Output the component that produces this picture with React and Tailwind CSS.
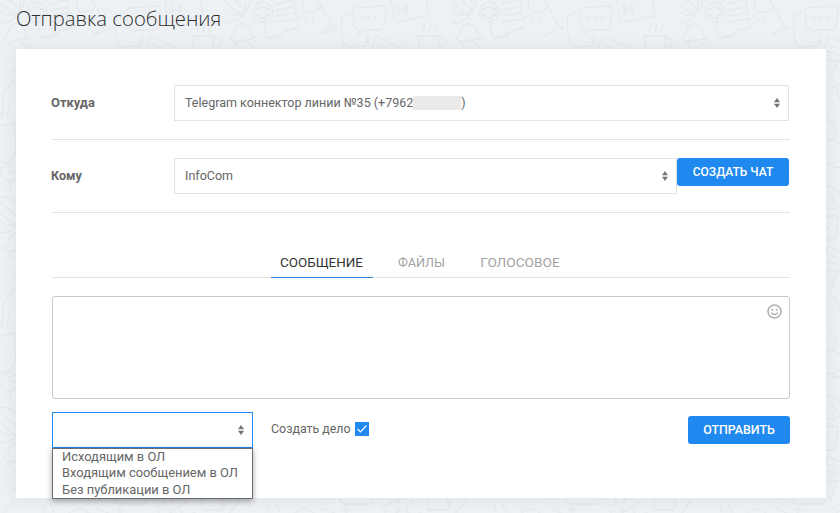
import React from "react";

function Arrows() {
  return (
    <svg width="6" height="10" viewBox="0 0 6 10" className="block">
      <path d="M3 0 L6 4.2 H0 Z M0 5.8 H6 L3 10 Z" fill="#737373" />
    </svg>
  );
}

function Select({ children, className }) {
  return (
    <div className={"flex h-9 items-center justify-between border border-[#e3e3e3] bg-white pl-[10px] pr-[8px] text-[12.5px] text-[#666666] " + className}>
      <div className="flex items-center whitespace-pre">{children}</div>
      <Arrows />
    </div>
  );
}

function Tile() {
  return (
    <g fill="none" stroke="#e5e8ec" strokeWidth="1.3" strokeLinecap="round" strokeLinejoin="round">
      {/* pie */}
      <circle cx="10" cy="1" r="14" />
      <path d="M10 1 L2 -12 M10 1 L22 -6 M10 1 L2 -12 L12 -6 Z" />
      {/* doc with plus */}
      <path d="M44 -8 L66 -12 L72 28 L42 38 Q36 30 40 14" />
      <circle cx="37" cy="12" r="10" />
      <path d="M34 7 H40 V9 H44 V15 H40 V18 H34 V15 H30 V9 H34 Z" />
      <path d="M50 4 L66 0 M50 10 L68 7 M50 16 L69 13 M50 22 L70 19 M42 38 L56 36 Q54 32 60 30 L70 28" />
      {/* desk lamp */}
      <path d="M78 -4 Q82 -8 90 -2 L96 6 Q90 14 80 12 Q74 6 78 -4 Z M96 6 L100 14 L102 18 L106 26 L92 36 L112 28 L106 26" />
      <path d="M81 18 L79 22 M87 20 L87 25 M76 16 L72 19" />
      {/* tablet with speech bubble */}
      <path d="M118 16 L124 12 M116 14 Q114 30 118 44 L122 47 L140 46 L143 34 M140 34 L143 44" />
      <path d="M130 8 L156 6 Q160 6 160 10 L158 26 Q157 30 153 30 L138 30 L132 34 L134 30 Q128 28 128 24 L127 12 Q127 8 130 8 Z" />
      <circle cx="136" cy="18" r="0.8" />
      <circle cx="143" cy="18" r="0.8" />
      <circle cx="150" cy="18" r="0.8" />
      {/* calendar */}
      <path d="M164 -6 L168 20 Q169 23 172 22 L200 16 Q204 15 203 12 L199 -6" />
      <path d="M172 4 L170 10 L176 10 M174 8 L172 16 M180 4 L177 12 L183 11 M181 6 L181 16" />
      {/* person / mushroom */}
      <path d="M8 34 Q10 22 18 24 Q25 26 26 36 L30 38 L8 42 L4 38 Z M10 42 Q10 50 18 50 M22 42 L30 50" />
      {/* cup */}
      <path d="M192 36 L214 36 L212 56 L195 56 Z M214 38 Q222 38 220 44 Q218 48 212 48 M198 32 Q196 30 198 28 Q200 26 198 24 M204 32 Q202 30 204 28 Q206 26 204 24 M210 32 Q208 30 210 28 Q212 26 210 24" />
      {/* card */}
      <path d="M150 36 L180 50 L172 60 L146 50 Z M150 44 L176 54" />
      {/* lower row */}
      <path d="M114 60 L114 78 Q114 84 120 84 L146 84 L146 60 M124 76 L132 76" />
      <path d="M154 88 L176 78 L188 82 L168 94 M158 90 L166 110 M170 88 L176 110 M180 86 L186 106" />
      <circle cx="194" cy="96" r="3" />
      <path d="M202 78 V90 H222 V78 M222 80 Q228 82 222 88" />
      <path d="M50 84 L54 92 M42 86 L44 92 M70 92 L80 88 L90 94 L70 100 Z" />
      <path d="M120 84 V94 M116 90 H124" />
      <path d="M92 72 L116 62 L120 70 L100 80 Z M96 88 L126 100" />
      <path d="M164 60 Q176 70 172 84 M152 80 Q156 70 160 60" />
      {/* left side */}
      <path d="M-6 128 L14 122 L16 150 Q10 168 -4 160 Z M14 132 Q24 134 22 142 M2 118 Q0 114 3 112 Q5 108 2 106 M8 116 Q6 112 9 110 Q11 106 8 104" />
      <circle cx="10" cy="172" r="9" />
      <path d="M10 166 V172 H15 M10 181 V192" />
      <circle cx="2" cy="215" r="18" />
      <path d="M-10 204 L18 228 M-4 198 L22 222" />
      <path d="M14 80 L4 92 L2 104 M16 68 L12 72" />
      {/* right side */}
      <path d="M150 120 Q160 124 158 136 Q150 144 144 140" />
      <circle cx="152" cy="152" r="12" />
      <path d="M158 166 L158 168 M155 167 H161" />
      <circle cx="160" cy="168" r="0.6" />
      <path d="M148 186 Q164 188 164 202 Q160 212 148 208 M152 194 L158 200 L154 204" />
      <path d="M150 60 L164 62 L164 84" />
      <path d="M60 130 L84 126 L88 150 L64 154 Z M120 140 L140 136 L144 160 L124 164 Z" />
    </g>
  );
}

function Background() {
  return (
    <svg className="absolute inset-0" width="840" height="513">
      <defs>
        <pattern id="doodles" x="0" y="0" width="226" height="210" patternUnits="userSpaceOnUse">
          <svg x="0" y="0" width="226" height="210" viewBox="0 0 226 210" overflow="hidden">
            <Tile />
          </svg>
          <svg x="0" y="0" width="226" height="210" viewBox="0 210 226 210" overflow="hidden">
            <Tile />
          </svg>
        </pattern>
      </defs>
      <rect width="840" height="513" fill="url(#doodles)" />
    </svg>
  );
}

export default function App() {
  const btn = "flex h-7 items-center justify-center rounded-[3px] bg-[#2089f0] font-medium text-white";
  return (
    <div className="relative h-[513px] w-[840px] overflow-hidden bg-[#eef1f4] font-['Roboto',sans-serif]">
      <Background />
      <div className="relative flex h-[49px] items-start pl-4">
        <h1 className="text-[20.3px] font-[350] leading-[36px] text-[#2f2f2f] font-['Open_Sans',sans-serif]">Отправка сообщения</h1>
      </div>
      <div className="relative ml-4 h-[449px] w-[810px] bg-white px-9 pt-9 shadow-[0_0_16px_rgba(0,0,0,0.07)]">
        <div className="flex h-9 items-center">
          <div className="w-[122px] -translate-x-px text-[12.9px] font-bold text-[#666666]">Откуда</div>
          <Select className="w-[615px]">
            <span>Telegram коннектор линии №35 (+7962</span>
            <span className="h-[14px] w-[48px] bg-[#ebeae9] blur-[0.5px]" />
            <span>)</span>
          </Select>
        </div>
        <div className="mt-[18px] h-px bg-[#e3e3e3]" />
        <div className="mt-[18px] flex h-9 items-start">
          <div className="flex h-9 w-[122px] -translate-x-px items-center text-[12.5px] font-bold text-[#666666]">Кому</div>
          <Select className="w-[503px]">InfoCom</Select>
          <button className={btn + " w-[112px] text-[12px]"}>СОЗДАТЬ ЧАТ</button>
        </div>
        <div className="mt-[18px] h-px bg-[#e3e3e3]" />
        <div className="flex h-[65px] items-end justify-center gap-[16px] border-b border-[#e3e3e3] pr-[2px]">
          <div className="-mb-px w-[102px] border-b border-[#2d84d8] pb-[6px] pt-px text-center text-[13.4px] leading-[16px] text-[#333333]">СООБЩЕНИЕ</div>
          <div className="w-[66px] pb-[6px] text-center text-[12.7px] leading-[16px] text-[#a3a3a3]">ФАЙЛЫ</div>
          <div className="w-[99px] pb-[7px] text-center text-[13.7px] leading-[16px] text-[#a3a3a3]">ГОЛОСОВОЕ</div>
        </div>
        <div className="relative mt-[18px] h-[103px] rounded-[3px] border border-[#c9c9c9] bg-white">
          <svg className="absolute right-[7px] top-[7px]" width="15" height="15" viewBox="0 0 15 15" fill="none" stroke="#b4b4b4">
            <circle cx="7.5" cy="7.5" r="6.5" strokeWidth="1.6" />
            <circle cx="5.3" cy="5.8" r="1" fill="#b4b4b4" stroke="none" />
            <circle cx="9.7" cy="5.8" r="1" fill="#b4b4b4" stroke="none" />
            <path d="M4 8.8 Q7.5 12.2 11 8.8" strokeWidth="1.2" />
          </svg>
        </div>
        <div className="mt-[13px] flex items-start">
          <div className="relative w-[201px]">
            <div className="flex h-9 items-center justify-end border border-[#2089f0] bg-white pr-[8px]">
              <Arrows />
            </div>
            <div className="absolute left-0 top-9 z-10 w-full border border-[#6e6e6e] bg-white pl-[9px] text-[12.9px] leading-[16.4px] text-[#666666] shadow-[0_2px_6px_rgba(0,0,0,0.35)]">
              <div>Исходящим в ОЛ</div>
              <div>Входящим сообщением в ОЛ</div>
              <div>Без публикации в ОЛ</div>
            </div>
          </div>
          <div className="ml-[18px] flex h-[34px] items-center text-[12.4px] text-[#666666]">
            <span>Создать дело</span>
            <span className="ml-1 flex h-[14px] w-[14px] items-center justify-center bg-[#2089f0]">
              <svg width="12" height="10" viewBox="0 0 12 10" fill="none" stroke="#ffffff" strokeWidth="1.2">
                <path d="M1.5 5 L4.5 8 L10.5 1.5" />
              </svg>
            </span>
          </div>
          <button className={btn + " ml-auto mt-1 w-[102px] text-[12.4px]"}>ОТПРАВИТЬ</button>
        </div>
      </div>
    </div>
  );
}
